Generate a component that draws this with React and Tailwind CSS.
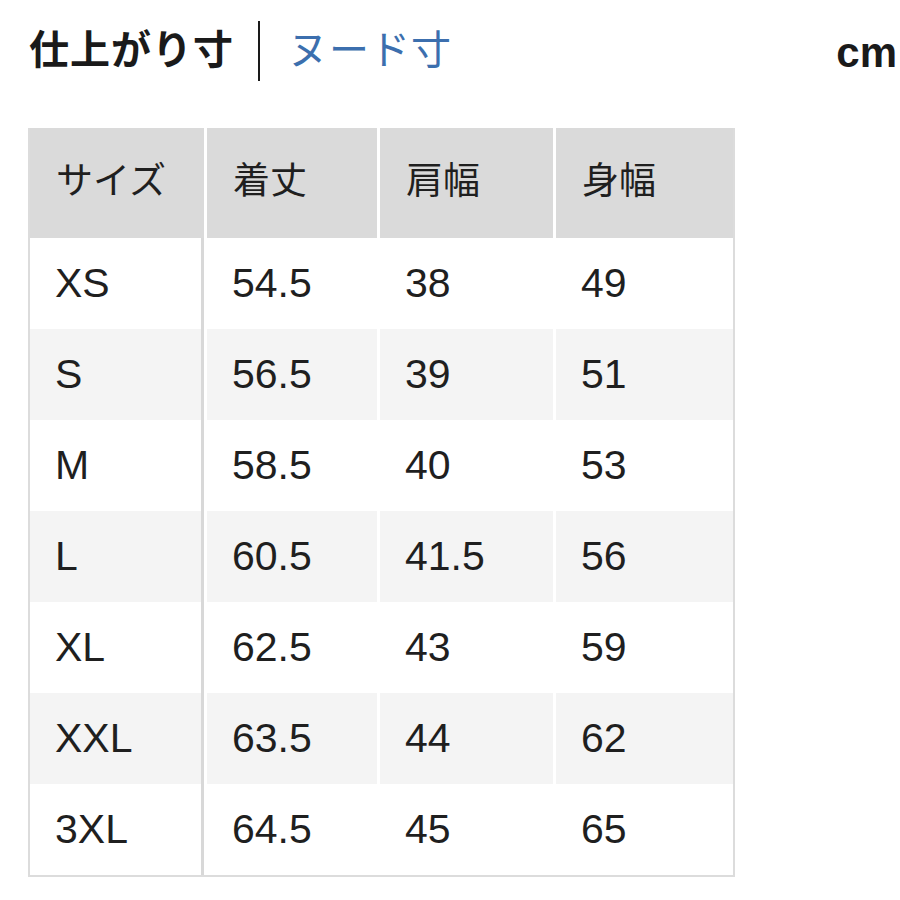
const JP = "font-['Liberation_Sans','Noto_Sans_CJK_JP',sans-serif]";

const rows = [
  ["XS", "54.5", "38", "49"],
  ["S", "56.5", "39", "51"],
  ["M", "58.5", "40", "53"],
  ["L", "60.5", "41.5", "56"],
  ["XL", "62.5", "43", "59"],
  ["XXL", "63.5", "44", "62"],
  ["3XL", "64.5", "45", "65"],
];

const headers = ["サイズ", "着丈", "肩幅", "身幅"];

export default function App() {
  return (
    <div className={`w-[900px] h-[900px] bg-white text-[#1f1f1f] ${JP}`}>
      {/* TITLE */}
      <div className="h-[100px] flex items-center pl-[29px] pr-[3px]">
        <span className="text-[40px] font-bold tracking-[1px] text-[#1a1a1a]">
          仕上がり寸
        </span>
        <span className="w-[2px] h-[60px] bg-[#1a1a1a] ml-[24px] mr-[28px] mt-[2px]" />
        <span className="text-[40px] text-[#3c6fae] tracking-[1px]">ヌード寸</span>
        <span className="ml-auto text-[42px] font-bold text-[#1a1a1a] mt-[4px]">cm</span>
      </div>

      {/* TABLE */}
      <div className="mt-[28px] ml-[28px] w-[707px] border-x-2 border-b-2 border-[#dcdcdc]">
        <div className="grid grid-cols-[174px_170px_173px_177px] gap-x-[3px] h-[110px]">
          {headers.map((h) => (
            <div
              key={h}
              className="bg-[#dadada] flex items-center pl-[26px] text-[37px] pb-[2px]"
            >
              {h}
            </div>
          ))}
        </div>

        {rows.map((r, i) => (
          <div
            key={r[0]}
            className="grid grid-cols-[174px_170px_173px_177px] gap-x-[3px] h-[91px]"
          >
            {r.map((c, j) => (
              <div
                key={j}
                className={`flex items-center pl-[25px] text-[41px] ${
                  i % 2 === 1 ? "bg-[#f4f4f4]" : "bg-white"
                } ${j === 0 ? "border-r-[3px] border-[#d8d8d8]" : ""}`}
              >
                {c}
              </div>
            ))}
          </div>
        ))}
      </div>
    </div>
  );
}
